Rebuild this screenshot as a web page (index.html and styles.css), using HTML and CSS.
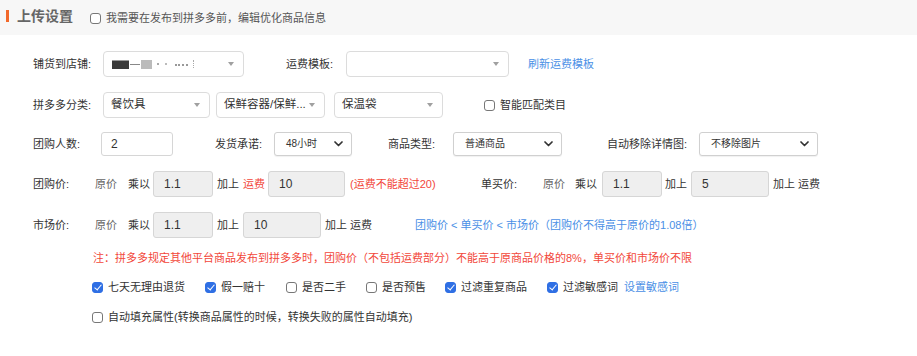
FILE: index.html
```html
<!DOCTYPE html>
<html lang="zh-CN">
<head>
<meta charset="utf-8">
<title>上传设置</title>
<link rel="stylesheet" href="styles.css">
</head>
<body>
<div class="header">
  <span class="bar"></span>
  <span class="title">上传设置</span>
  <label class="hcb"><span class="cb"></span>我需要在发布到拼多多前，编辑优化商品信息</label>
</div>
<div class="form">
  <div class="row r1">
    <span class="lbl w70">铺货到店铺:</span>
    <div class="csel w141">
      <span class="redact"><i class="rd1"></i><i class="rd2"></i><i class="rd3"></i><i class="rd4"></i><i class="rd5"></i><i class="rd6"></i><i class="rd7"></i></span>
      <span class="tri"></span>
    </div>
    <span class="lbl ml42 w60">运费模板:</span>
    <div class="csel w163"><span></span><span class="tri"></span></div>
    <a class="link ml19">刷新运费模板</a>
  </div>
  <div class="row r2">
    <span class="lbl w70">拼多多分类:</span>
    <div class="csel w107"><span>餐饮具</span><span class="tri"></span></div>
    <div class="csel w109 ml6"><span>保鲜容器/保鲜...</span><span class="tri"></span></div>
    <div class="csel w109 ml9"><span>保温袋</span><span class="tri"></span></div>
    <label class="ck ml41"><span class="cb"></span>智能匹配类目</label>
  </div>
  <div class="row r3">
    <span class="lbl w68">团购人数:</span>
    <div class="inp white w72">2</div>
    <span class="lbl ml42 w59">发货承诺:</span>
    <div class="nsel w78"><span>48小时</span><svg class="chev" width="9" height="6" viewBox="0 0 9 6"><path d="M1 1 L4.5 4.5 L8 1" fill="none" stroke="#333" stroke-width="1.7" stroke-linecap="round" stroke-linejoin="round"/></svg></div>
    <span class="lbl ml36 w65">商品类型:</span>
    <div class="nsel w109"><span>普通商品</span><svg class="chev" width="9" height="6" viewBox="0 0 9 6"><path d="M1 1 L4.5 4.5 L8 1" fill="none" stroke="#333" stroke-width="1.7" stroke-linecap="round" stroke-linejoin="round"/></svg></div>
    <span class="lbl ml45 w92">自动移除详情图:</span>
    <div class="nsel w119"><span>不移除图片</span><svg class="chev" width="9" height="6" viewBox="0 0 9 6"><path d="M1 1 L4.5 4.5 L8 1" fill="none" stroke="#333" stroke-width="1.7" stroke-linecap="round" stroke-linejoin="round"/></svg></div>
  </div>
  <div class="row r4">
    <span class="lbl w62">团购价:</span>
    <span class="sub w33">原价</span>
    <span class="txt w25">乘以</span>
    <div class="inp gray w60">1.1</div>
    <span class="txt ml4 w26">加上</span>
    <span class="red w25">运费</span>
    <div class="inp gray w77">10</div>
    <span class="red ml5 w131">(运费不能超过20)</span>
    <span class="lbl w62">单买价:</span>
    <span class="sub w32">原价</span>
    <span class="txt w27">乘以</span>
    <div class="inp gray w60">1.1</div>
    <span class="txt ml3 w26">加上</span>
    <div class="inp gray w78">5</div>
    <span class="txt ml4">加上 运费</span>
  </div>
  <div class="row r5">
    <span class="lbl w62">市场价:</span>
    <span class="sub w33">原价</span>
    <span class="txt w25">乘以</span>
    <div class="inp gray w60">1.1</div>
    <span class="txt ml4 w26">加上</span>
    <div class="inp gray w78">10</div>
    <span class="txt ml4 w90">加上 运费</span>
    <span class="blue">团购价 &lt; 单买价 &lt; 市场价（团购价不得高于原价的1.08倍）</span>
  </div>
  <div class="row note">注：拼多多规定其他平台商品发布到拼多多时，团购价（不包括运费部分）不能高于原商品价格的8%，单买价和市场价不限</div>
  <div class="row checks">
    <label class="ck w113"><span class="cb on"></span>七天无理由退货</label>
    <label class="ck w81"><span class="cb on"></span>假一赔十</label>
    <label class="ck w80"><span class="cb"></span>是否二手</label>
    <label class="ck w79"><span class="cb"></span>是否预售</label>
    <label class="ck w102"><span class="cb on"></span>过滤重复商品</label>
    <label class="ck"><span class="cb on"></span>过滤敏感词</label>
    <a class="link ml6">设置敏感词</a>
  </div>
  <div class="row checks2">
    <label class="ck"><span class="cb"></span>自动填充属性(转换商品属性的时候，转换失败的属性自动填充)</label>
  </div>
</div>
</body>
</html>
```
FILE: styles.css
```css
* { box-sizing: border-box; }
body {
  margin: 0;
  background: #fff;
  font-family: "Liberation Sans", "Noto Sans CJK SC", sans-serif;
  font-size: 11px;
  color: #333;
  width: 917px;
  height: 356px;
  overflow: hidden;
}
.header {
  height: 35px;
  background: #f7f7f7;
  display: flex;
  align-items: center;
  padding-left: 6px;
}
.bar {
  width: 3px;
  height: 12px;
  background: #f2692b;
  margin-top: -4px;
}
.title {
  margin-left: 8px;
  font-size: 14px;
  font-weight: bold;
  color: #666;
  line-height: 1;
  margin-top: -3px;
}
.hcb {
  margin-left: 17px;
  display: flex;
  align-items: center;
  color: #555;
  font-size: 11px;
  line-height: 1;
  margin-top: 2px;
}
.cb {
  width: 11px;
  height: 11px;
  border: 1px solid #777;
  border-radius: 3px;
  background: #fff;
  margin-right: 5px;
  flex: none;
  position: relative;
}
.cb.on {
  background: #2f6fe4;
  border-color: #2f6fe4;
}
.cb.on::after {
  content: "";
  position: absolute;
  left: 3px;
  top: 0px;
  width: 3px;
  height: 6px;
  border: solid #fff;
  border-width: 0 1.6px 1.6px 0;
  transform: rotate(40deg);
}
.form {
  padding-left: 33px;
}
.row {
  display: flex;
  align-items: center;
  line-height: 1;
}
.r1 { margin-top: 16px; height: 26px; }
.r2 { margin-top: 15px; height: 26px; }
.r3 { margin-top: 14px; height: 24px; }
.r4 { margin-top: 15px; height: 26px; }
.r5 { margin-top: 15px; height: 26px; }
.note { margin-top: 12px; height: 16px; margin-left: 60px; color: #f2473a; }
.checks { margin-top: 13px; height: 16px; margin-left: 59px; }
.checks2 { margin-top: 14px; height: 16px; margin-left: 59px; }

.lbl { color: #333; flex: none; }
.sub { color: #666; flex: none; }
.txt { color: #333; flex: none; }
.red { color: #f2473a; flex: none; }
.blue { color: #4a8fe6; }
.link { color: #4a8fe6; cursor: pointer; }
.ck { display: flex; align-items: center; color: #333; flex: none; }

.csel {
  height: 26px;
  border: 1px solid #dcdcdc;
  border-radius: 4px;
  background: #fff;
  display: flex;
  align-items: center;
  justify-content: space-between;
  padding: 0 9px 0 7px;
  color: #333;
  flex: none;
  font-size: 11.5px;
}
.tri {
  width: 0;
  height: 0;
  border-left: 3px solid transparent;
  border-right: 3px solid transparent;
  border-top: 4px solid #a0a0a0;
}
.redact { display: flex; align-items: center; height: 12px; }
.redact i { display: block; }
.rd1 { width: 17px; height: 9px; background: #3a3a3a; border-top: 1px solid #999; margin-left: 1px; }
.rd2 { width: 10px; height: 1px; background: #888; margin-left: 1px; }
.rd3 { width: 11px; height: 9px; background: #bbb; margin-left: 1px; }
.rd4 { width: 2px; height: 2px; background: #aaa; margin-left: 5px; }
.rd5 { width: 2px; height: 2px; background: #bbb; margin-left: 6px; }
.rd6 { width: 13px; height: 3px; border-bottom: 2px dotted #999; margin-left: 8px; }
.rd7 { width: 2px; height: 8px; border-right: 1px dotted #aaa; margin-left: 4px; }

.nsel {
  height: 24px;
  border: 1px solid #d0d0d0;
  border-radius: 3px;
  background: #fff;
  box-shadow: 0 1px 1px rgba(0,0,0,0.06);
  display: flex;
  align-items: center;
  justify-content: space-between;
  padding: 0 8px 0 11px;
  font-size: 10px;
  color: #333;
  flex: none;
}
.inp {
  border: 1px solid #d6d6d6;
  border-radius: 3px;
  display: flex;
  align-items: center;
  padding-left: 10px;
  font-size: 12px;
  color: #333;
  flex: none;
}
.inp.white { background: #fff; height: 24px; padding-left: 9px; }
.inp.gray { background: #efefef; height: 26px; }

.w25 { width: 25px; } .w26 { width: 26px; } .w27 { width: 27px; }
.w32 { width: 32px; } .w33 { width: 33px; }
.w59 { width: 59px; } .w60 { width: 60px; } .w62 { width: 62px; } .w65 { width: 65px; }
.w68 { width: 68px; } .w70 { width: 70px; } .w72 { width: 72px; }
.w77 { width: 77px; } .w78 { width: 78px; } .w79 { width: 79px; } .w80 { width: 80px; } .w81 { width: 81px; }
.w90 { width: 90px; } .w92 { width: 92px; } .w102 { width: 102px; }
.w107 { width: 107px; } .w109 { width: 109px; } .w113 { width: 113px; } .w119 { width: 119px; }
.w131 { width: 131px; } .w141 { width: 141px; } .w163 { width: 163px; }
.ml3 { margin-left: 3px; } .ml4 { margin-left: 4px; } .ml5 { margin-left: 5px; } .ml6 { margin-left: 6px; }
.ml9 { margin-left: 9px; } .ml19 { margin-left: 19px; } .ml36 { margin-left: 36px; }
.ml41 { margin-left: 41px; } .ml42 { margin-left: 42px; } .ml45 { margin-left: 45px; }
```
